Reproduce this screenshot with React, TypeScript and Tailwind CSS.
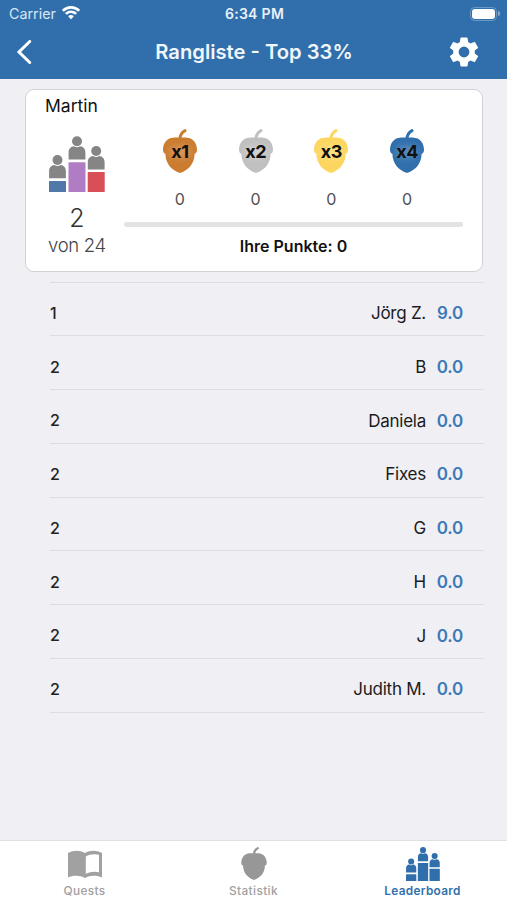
import React from 'react';

interface Player {
  rank: number;
  name: string;
  score: string;
}

const players: Player[] = [
  { rank: 1, name: 'Jörg Z.', score: '9.0' },
  { rank: 2, name: 'B', score: '0.0' },
  { rank: 2, name: 'Daniela', score: '0.0' },
  { rank: 2, name: 'Fixes', score: '0.0' },
  { rank: 2, name: 'G', score: '0.0' },
  { rank: 2, name: 'H', score: '0.0' },
  { rank: 2, name: 'J', score: '0.0' },
  { rank: 2, name: 'Judith M.', score: '0.0' },
];

const acorns = [
  { label: 'x1', count: 0, color: 'text-[#cb7c2f]', glow: 'bg-[#d99c5f]' },
  { label: 'x2', count: 0, color: 'text-[#c0c0c0]', glow: 'bg-[#d6d6d6]' },
  { label: 'x3', count: 0, color: 'text-[#fdd660]', glow: 'bg-[#fee28b]' },
  { label: 'x4', count: 0, color: 'text-[#306fac]', glow: 'bg-[#6493c2]' },
];

const Acorn = ({ className }: { className?: string }) => (
  <svg viewBox="0 0 34 44" className={className} fill="currentColor">
    <path d="M16.800 10.500c.2-4.500 2-7.300 5.200-8.900" fill="none" stroke="currentColor" strokeWidth="3" strokeLinecap="round" />
    <path d="M17 8.500c3.500 0 7-.4 10 .8 4.300 1.800 6.800 6 7 11.200 0 2.200-.6 4-2.400 4.200C31.500 34 26 40.800 17.800 43.700q-.8.300-1.600 0C8 40.800 2.500 34 2.400 24.700.6 24.500 0 22.700 0 20.500c.2-5.200 2.700-9.400 7-11.200 3-1.200 6.500-.8 10-.8z" />
  </svg>
);

const Podium = ({ className, blocks }: { className?: string; blocks?: string[] }) => {
  const person = blocks ? '#858585' : 'currentColor';
  const [left, mid, right] = blocks ?? ['currentColor', 'currentColor', 'currentColor'];
  return (
    <svg viewBox="0 0 56 56" className={className}>
      <g fill={person}>
        <circle cx="8.500" cy="24" r="5" />
        <circle cx="28" cy="5.200" r="5" />
        <circle cx="47.200" cy="15" r="5" />
        <path d="M.1 42.200v-7c0-3.600 2-6 5.400-6.300 1.800 1.300 4.200 1.300 6 0 3.400.3 5.400 2.700 5.400 6.300v7z" />
        <path d="M19.600 23.600v-7c0-3.600 2-6 5.400-6.300 1.800 1.300 4.200 1.300 6 0 3.400.3 5.400 2.700 5.400 6.300v7z" />
        <path d="M38.800 33.400v-7c0-3.600 2-6 5.400-6.300 1.800 1.300 4.200 1.300 6 0 3.400.3 5.400 2.700 5.400 6.300v7z" />
      </g>
      <rect x="0" y="45" width="17" height="11" rx=".6" fill={left} />
      <rect x="19.500" y="26.300" width="17" height="29.700" rx=".6" fill={mid} />
      <rect x="38.700" y="36" width="17" height="20" rx=".6" fill={right} />
    </svg>
  );
};

const StatusBar = () => (
  <div className="flex h-[27px] items-center justify-between pr-[7px] pl-[9px]">
    <div className="flex w-[120px] items-center gap-[6px]">
      <span className="text-[14.300px] text-[#d9e6f2]">Carrier</span>
      <svg viewBox="0 0 18 14" className="h-[14px] w-[18px] -translate-y-px" fill="white">
        <path d="M9 0c3.400 0 6.500 1.300 8.800 3.500.2.200.2.500 0 .7l-1.200 1.200c-.2.200-.5.200-.7 0A10 10 0 0 0 9 2.700a10 10 0 0 0-6.900 2.700c-.2.200-.5.200-.7 0L.2 4.200c-.2-.2-.2-.5 0-.7A12.700 12.700 0 0 1 9 0z" />
        <path d="M9 4.500c2.200 0 4.200.8 5.700 2.200.2.200.2.500 0 .7l-1.200 1.200c-.2.200-.5.200-.7 0A5.600 5.600 0 0 0 9 7.100c-1.500 0-2.800.6-3.800 1.500-.2.200-.5.200-.7 0L3.300 7.400c-.2-.2-.2-.5 0-.7A8.300 8.300 0 0 1 9 4.500z" />
        <path d="M9 8.900c1 0 1.900.4 2.600 1 .2.200.2.500 0 .7L9.400 13c-.2.200-.6.200-.8 0l-2.200-2.400c-.2-.2-.2-.5 0-.7.700-.6 1.600-1 2.600-1z" />
      </svg>
    </div>
    <span className="text-[14px] font-semibold tracking-[0.300px] text-[#e9f1f8]">6:34 PM</span>
    <div className="flex w-[120px] items-center justify-end gap-px">
      <div className="h-[14px] w-[27px] rounded-[4.500px] border border-[#6b98c5] p-px">
        <div className="h-full w-full rounded-[3px] bg-white" />
      </div>
      <div className="h-[5px] w-[2px] rounded-r-full bg-[#84aad0]" />
    </div>
  </div>
);

const Header = () => (
  <header className="h-[79px] shrink-0 bg-[#306fac] text-white">
    <StatusBar />
    <div className="flex h-[50px] items-center justify-between pr-7 pl-4">
      <svg viewBox="0 0 16 24" className="mr-[27px] h-6 w-4" fill="none" stroke="white" strokeWidth="3">
        <path d="M13.700 1.500 3 12l10.700 10.500" strokeLinecap="round" />
      </svg>
      <h1 className="text-[20.200px] font-semibold text-[#f1f6fa]">Rangliste - Top 33%</h1>
      <svg viewBox="2 2 20 20" className="h-[30px] w-[30px]" fill="currentColor">
        <path d="M19.140 12.940c.04-.3.060-.61.060-.94 0-.32-.02-.64-.07-.94l2.030-1.580a.49.49 0 0 0 .12-.61l-1.920-3.320a.49.49 0 0 0-.59-.22l-2.390.96c-.5-.38-1.030-.7-1.620-.94l-.36-2.540a.48.48 0 0 0-.48-.41h-3.840a.47.47 0 0 0-.47.41l-.36 2.540c-.59.24-1.130.57-1.620.94l-2.390-.96a.48.48 0 0 0-.59.22L2.740 8.870a.47.47 0 0 0 .12.61l2.030 1.580c-.05.3-.09.63-.09.94s.02.64.07.94l-2.030 1.580a.49.49 0 0 0-.12.61l1.920 3.320c.12.22.37.29.59.22l2.390-.96c.5.38 1.030.7 1.620.94l.36 2.540c.05.24.24.41.48.41h3.840c.24 0 .44-.17.47-.41l.36-2.540c.59-.24 1.130-.56 1.620-.94l2.390.96c.22.080.47 0 .59-.22l1.920-3.320a.47.47 0 0 0-.12-.61zM12 15.600A3.600 3.600 0 1 1 12 8.400a3.600 3.600 0 0 1 0 7.200z" />
      </svg>
    </div>
  </header>
);

const SummaryCard = () => (
  <section className="mr-6 ml-[25px] mt-[10px] flex h-[183px] shrink-0 rounded-[9px] border-[1.500px] border-[#d2d2d6] bg-white">
    <div className="flex w-[98px] flex-col items-center pl-1">
      <div className="mt-[6px] w-full pl-[15px] text-[17.500px] leading-5 text-[#111]">Martin</div>
      <Podium className="mt-[20px] h-14 w-14" blocks={['#5078a9', '#b07cc3', '#d84f58']} />
      <div className="mt-[12px] text-[25px] leading-7 font-light text-[#333]">2</div>
      <div className="mt-px text-[18.500px] leading-6 font-light tracking-[-0.300px] whitespace-nowrap text-[#444]">von 24</div>
    </div>
    <div className="mr-[19px] flex flex-1 flex-col">
      <div className="mt-[39px] flex pr-[18px] pl-[18px]">
        {acorns.map((acorn) => (
          <div key={acorn.label} className="flex flex-1 flex-col items-center">
            <div className="relative h-11 w-[34px]">
              <Acorn className={`h-11 w-[34px] ${acorn.color}`} />
              <div className={`absolute top-[17px] left-[6px] h-3 w-[22px] rounded-full opacity-80 blur-[3px] ${acorn.glow}`} />
              <span className="absolute -inset-x-1 top-[13px] text-center text-[18px] leading-5 font-bold tracking-[-0.500px] text-[#111]">
                {acorn.label}
              </span>
            </div>
            <span className="mt-4 text-[16px] leading-5 text-[#505050]">{acorn.count}</span>
          </div>
        ))}
      </div>
      <div className="mt-[13px] h-[5px] shrink-0 rounded-full bg-[#e3e3e3]" />
      <div className="mt-[9px] text-center text-[16px] leading-5 font-semibold text-[#111]">Ihre Punkte: 0</div>
    </div>
  </section>
);

const PlayerRow = ({ rank, name, score }: Player) => (
  <li className="flex h-[53.750px] items-center border-b border-[#dcdce1] pt-[10px] pr-[21px] text-[17px]">
    <span className="flex-1 pb-[2px] text-[16px] font-medium text-[#222]">{rank}</span>
    <span className="tracking-[-0.250px] text-[#1b1b1d]">{name}</span>
    <span className="w-[37px] text-right font-semibold tracking-[-0.200px] text-[#3c7ab7]">{score}</span>
  </li>
);

const TabBar = () => (
  <nav className="mt-auto flex h-[60px] shrink-0 border-t border-[#e0e0e4] bg-white text-[11.800px] leading-4 font-medium tracking-[0.400px] text-[#a1a1a1]">
    <div className="flex flex-1 flex-col items-center pt-[9px]">
      <svg viewBox="0 0 36 28" className="h-7 w-9" fill="currentColor">
        <path
          fillRule="evenodd"
          d="M1 3C6.500 0 13 0 18 3 23 0 29.500 0 35 3v24.500c-5-2.500-12-2.500-17 .5-5-3-12-3-17-.5zM18.800 6.500v17.300c4-2 9-2.500 13.200-1.500V4.800C27.500 3.600 22.500 4.200 18.800 6.500z"
        />
      </svg>
      <span className="mt-[5px]">Quests</span>
    </div>
    <div className="flex flex-1 flex-col items-center pt-[6px]">
      <Acorn className="h-[33px] w-[26px] text-[#979797]" />
      <span className="mt-[3px]">Statistik</span>
    </div>
    <div className="flex flex-1 flex-col items-center pt-[6px] text-[#306fac]">
      <Podium className="h-[34px] w-[34px]" />
      <span className="mt-[2px] tracking-[0.300px] font-semibold">Leaderboard</span>
    </div>
  </nav>
);

const App = () => (
  <div className="flex h-[900px] w-[507px] flex-col overflow-hidden bg-[#efeff4] font-['Inter',sans-serif]">
    <Header />
    <SummaryCard />
    <ul className="mt-[9.500px] mr-[23px] ml-[50px] border-t border-[#dcdce1]">
      {players.map((player) => (
        <PlayerRow key={player.name} {...player} />
      ))}
    </ul>
    <TabBar />
  </div>
);

export default App;
